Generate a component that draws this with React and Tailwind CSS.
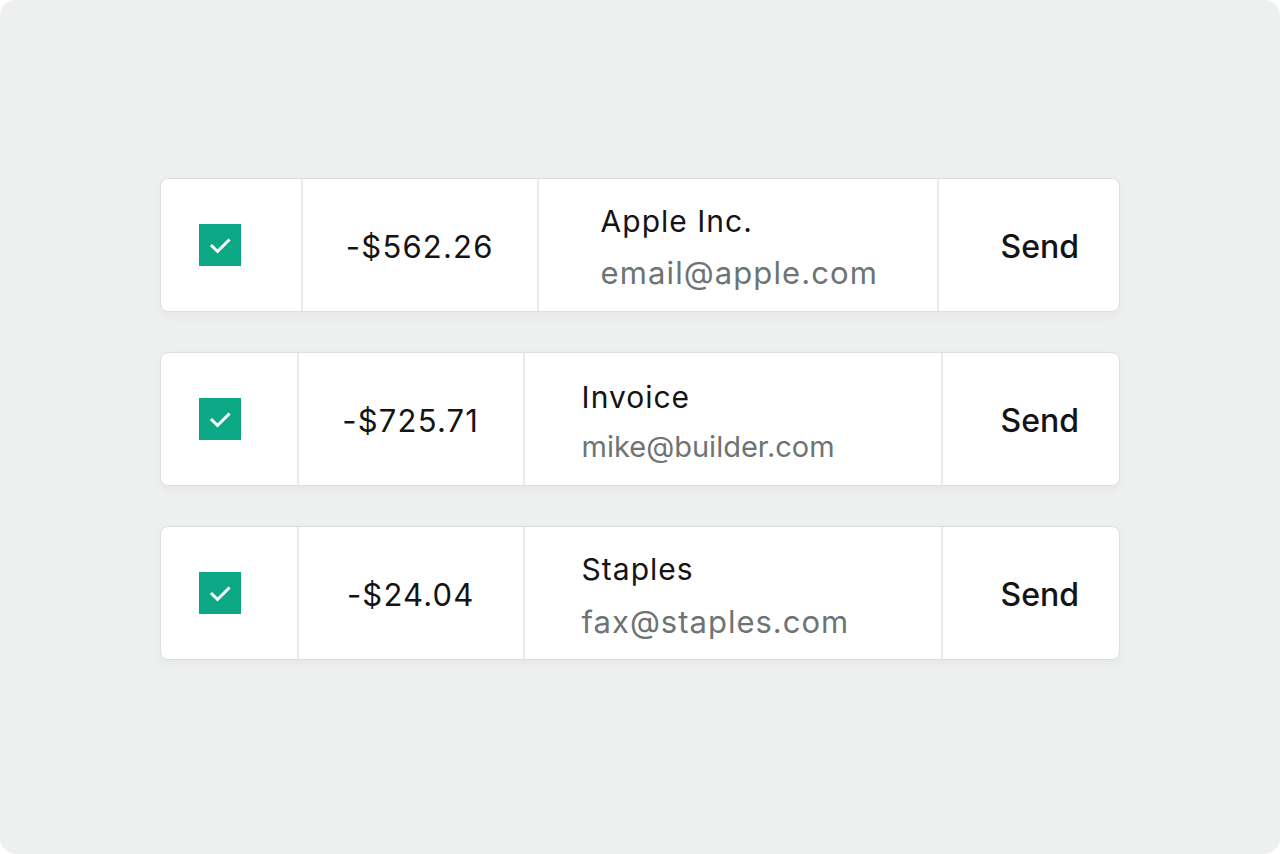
import React from "react";

const rows = [
  {
    amount: "-$562.26", name: "Apple Inc.", email: "email@apple.com",
    w: ["w-[142px]", "w-[236px]", "w-[401px]", "w-[180px]"],
    nameBox: "pl-[62px] pt-[5px] gap-[17px]",
    emailCls: "text-[31px] leading-[36px] tracking-[1.1px]",
  },
  {
    amount: "-$725.71", name: "Invoice", email: "mike@builder.com",
    w: ["w-[138px]", "w-[226px]", "w-[419px]", "w-[176px]"],
    nameBox: "pl-[57px] pt-[5px] gap-[16px]",
    emailCls: "text-[29px] leading-[34px] tracking-[0px]",
  },
  {
    amount: "-$24.04", name: "Staples", email: "fax@staples.com",
    w: ["w-[138px]", "w-[226px]", "w-[419px]", "w-[176px]"],
    nameBox: "pl-[57px] pt-[6px] gap-[18px]",
    emailCls: "text-[31px] leading-[36px] tracking-[1px]",
  },
];

function Check() {
  return (
    <div className="w-[42px] h-[42px] bg-[#0ca886] flex items-center justify-center">
      <svg width="42" height="42" viewBox="0 0 42 42" fill="none">
        <path d="M13 22 L18.5 27.5 L29.5 16.5" stroke="white" strokeWidth="3" strokeLinecap="square" strokeLinejoin="miter" />
      </svg>
    </div>
  );
}

export default function App() {
  return (
    <div className="w-[1280px] h-[854px] bg-white" style={{ fontFamily: "Inter, 'Noto Sans', sans-serif" }}>
      <div className="w-full h-full rounded-[16px] bg-[#edf0ef] pt-[178px] px-[160px] flex flex-col gap-[40px]">
        {rows.map((r, i) => (
          <div key={i} className="h-[134px] w-[960px] bg-white rounded-[8px] border border-[#dcdfde] shadow-[0_4px_12px_rgba(0,0,0,0.04)] flex">
            <div className={`${r.w[0]} h-full flex items-center pl-[38px] border-r-2 border-[#e8ebea]`}>
              <Check />
            </div>
            <div className={`${r.w[1]} h-full flex items-center justify-center pt-[4px] border-r-2 border-[#e8ebea] text-[31px] text-[#141414] tracking-[1.2px]`}>
              {r.amount}
            </div>
            <div className={`${r.w[2]} h-full flex flex-col justify-center ${r.nameBox} border-r-2 border-[#e8ebea]`}>
              <div className="text-[30px] leading-[34px] tracking-[1px] text-[#141414]">{r.name}</div>
              <div className={`${r.emailCls} text-[#6e7473]`}>{r.email}</div>
            </div>
            <div className={`${r.w[3]} h-full flex items-center justify-end pt-[4px] pr-[40px] text-[32px] font-medium text-[#141414]`}>
              Send
            </div>
          </div>
        ))}
      </div>
    </div>
  );
}
